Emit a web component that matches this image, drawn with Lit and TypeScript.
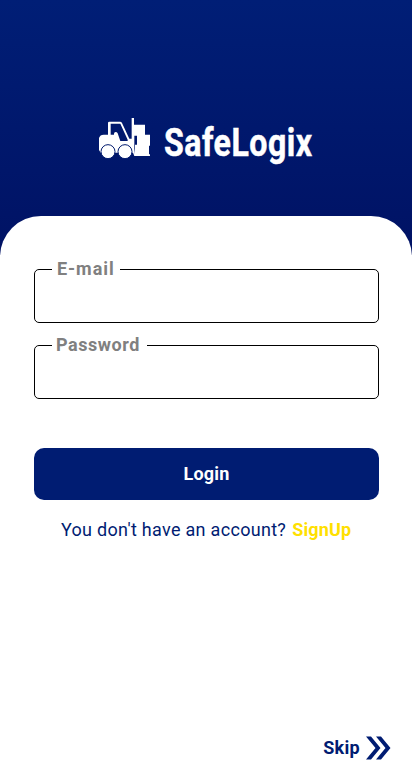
import { LitElement, html, css } from "lit";
import { customElement, property } from "lit/decorators.js";

@customElement("outlined-field")
class OutlinedField extends LitElement {
  @property() label = "";
  @property() type = "text";

  static styles = css`
    :host { display: block; }
    .field {
      box-sizing: border-box;
      height: 62px;
      margin: 0;
      padding: 0;
      min-width: 0;
      border: 1px solid #000;
      border-radius: 5px;
    }
    .legend {
      box-sizing: border-box;
      height: 16px;
      margin-left: 17px;
      padding: 0 var(--label-end, 7px) 0 var(--label-start, 4px);
      font: 700 18px/16px Roboto, sans-serif;
      letter-spacing: var(--label-spacing, 0.55px);
      color: #808080;
      white-space: nowrap;
    }
    .input {
      display: block;
      box-sizing: border-box;
      width: 100%;
      height: 40px;
      padding: 0 16px;
      border: 0;
      outline: 0;
      background: transparent;
      font: 18px Roboto, sans-serif;
    }
  `;

  render() {
    return html`<fieldset class="field">
      <legend class="legend">${this.label}</legend>
      <input class="input" type=${this.type} aria-label=${this.label} />
    </fieldset>`;
  }
}

@customElement("app-root")
class AppRoot extends LitElement {
  static styles = css`
    :host {
      display: flex;
      flex-direction: column;
      height: 778px;
      overflow: hidden;
      font-family: Roboto, sans-serif;
      background: linear-gradient(#001e76 0, #001264 256px);
    }
    .brand {
      display: flex;
      height: 216px;
      box-sizing: border-box;
      padding: 118px 0 0 99px;
      gap: 13px;
    }
    .truck { width: 52px; height: 42px; flex: none; }
    .name {
      margin: 0;
      height: 50px;
      font-size: 38px;
      font-weight: 700;
      line-height: 50px;
      letter-spacing: 0.6px;
      color: #fff;
      -webkit-text-stroke: 0.5px #fff;
      transform: scaleX(0.845);
      transform-origin: left;
    }
    .panel {
      flex: 1;
      display: flex;
      flex-direction: column;
      box-sizing: border-box;
      padding: 45px 33px 17px 34px;
      background: #fff;
      border-radius: 41px 41px 0 0;
    }
    .fields { display: grid; gap: 14px; }
    .email { --label-spacing: 0.95px; --label-start: 5px; --label-end: 5px; }
    .login {
      height: 52px;
      margin-top: 49px;
      padding: 0 0 2px;
      border: 0;
      border-radius: 10px;
      background: #001c72;
      color: #fff;
      font: 700 18px Roboto, sans-serif;
      letter-spacing: 0.2px;
      flex: none;
    }
    .signup {
      display: flex;
      gap: 6px;
      padding-left: 27px;
      margin: 18px 0 0;
      font-size: 18px;
      line-height: 24px;
      color: #001c72;
      white-space: nowrap;
    }
    .question { letter-spacing: 0.3px; }
    .link { font-weight: 700; letter-spacing: 0.15px; color: #ffe000; }
    .skip {
      display: flex;
      align-items: center;
      gap: 6px;
      margin: auto -12px 0 auto;
      font-size: 18px;
      line-height: 26px;
      font-weight: 700;
      letter-spacing: 0.3px;
      color: #001c72;
    }
    .arrows { width: 25px; height: 24px; }
  `;

  render() {
    return html`
      <header class="brand">
        <svg class="truck" viewBox="297 354 156 126" fill="#fff">
          <path fill-rule="evenodd" d="M297 414Q300 404 311 404H324V369Q324 365 328 365H360Q364 365 366 369L388 416H395V354H402V374H435V404H450V437H447V463H450V468H403L399 458H302L297 450ZM332 371V404H342V401Q342 396 347 396Q351 396 353 400L361 423H383V419L361 371ZM403 407V462L405 446V434H411V407Z"/>
          <g stroke="#00196d" stroke-width="3">
            <circle cx="324" cy="455" r="21"/><circle cx="375" cy="455" r="21"/>
          </g>
        </svg>
        <h1 class="name">SafeLogix</h1>
      </header>
      <main class="panel">
        <div class="fields">
          <outlined-field class="email" label="E-mail"></outlined-field>
          <outlined-field label="Password" type="password"></outlined-field>
        </div>
        <button class="login">Login</button>
        <p class="signup">
          <span class="question">You don't have an account?</span>
          <span class="link">SignUp</span>
        </p>
        <div class="skip">
          <span>Skip</span>
          <svg class="arrows" viewBox="0 0 25 24" fill="#001c72">
            <path d="M0 0.500H5L14.500 12L5 23.500H0L9.500 12ZM10 0.500H15L24.500 12L15 23.500H10L19.500 12Z"/>
          </svg>
        </div>
      </main>
    `;
  }
}
